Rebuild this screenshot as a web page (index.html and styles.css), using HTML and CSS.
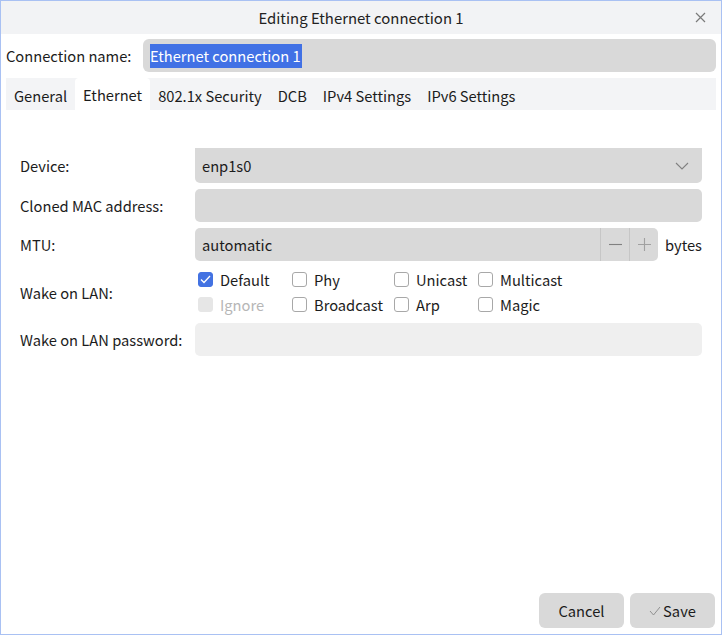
FILE: index.html
```html
<!DOCTYPE html>
<html>
<head>
<meta charset="utf-8">
<link rel="stylesheet" href="styles.css">
</head>
<body>
<div class="window">
  <div class="titlebar">
    <span></span>
    <span class="title">Editing Ethernet connection 1</span>
    <span class="close">
      <svg width="11" height="11" viewBox="0 0 11 11"><path d="M1 1L10 10M10 1L1 10" stroke="#7a7a7a" stroke-width="1.2" fill="none"/></svg>
    </span>
  </div>

  <div class="namerow">
    <label class="namelabel">Connection name:</label>
    <div class="nameinput"><span class="sel">Ethernet connection 1</span></div>
  </div>

  <div class="tabs">
    <div class="tab">General</div>
    <div class="tab active">Ethernet</div>
    <div class="tab">802.1x Security</div>
    <div class="tab">DCB</div>
    <div class="tab">IPv4 Settings</div>
    <div class="tab">IPv6 Settings</div>
  </div>

  <div class="form">
    <div class="lbl">Device:</div>
    <div class="field combo">
      <span>enp1s0</span>
      <svg class="chev" width="14" height="8" viewBox="0 0 14 8"><path d="M1 1L7 7L13 1" stroke="#808080" stroke-width="1.1" fill="none"/></svg>
    </div>

    <div class="lbl">Cloned MAC address:</div>
    <div class="field mac"></div>

    <div class="lbl">MTU:</div>
    <div class="mturow">
      <div class="field spin">
        <span class="spinval">automatic</span>
        <span class="spinbtn"><svg width="13" height="13" viewBox="0 0 13 13"><path d="M0 6.5H13" stroke="#808080" stroke-width="1.1"/></svg></span>
        <span class="spinbtn"><svg width="13" height="13" viewBox="0 0 13 13"><path d="M0 6.5H13M6.5 0V13" stroke="#a0a0a0" stroke-width="1.1"/></svg></span>
      </div>
      <span class="unit">bytes</span>
    </div>

    <div class="lbl">Wake on LAN:</div>
    <div class="checks">
      <label class="cb"><span class="box checked"><svg width="11" height="9" viewBox="0 0 11 9"><path d="M1 4.5L4 7.5L10 1" stroke="#fff" stroke-width="1.3" fill="none"/></svg></span>Default</label>
      <label class="cb"><span class="box"></span>Phy</label>
      <label class="cb"><span class="box"></span>Unicast</label>
      <label class="cb"><span class="box"></span>Multicast</label>
      <label class="cb disabled"><span class="box"></span>Ignore</label>
      <label class="cb"><span class="box"></span>Broadcast</label>
      <label class="cb"><span class="box"></span>Arp</label>
      <label class="cb"><span class="box"></span>Magic</label>
    </div>

    <div class="lbl">Wake on LAN password:</div>
    <div class="field pw"></div>
  </div>

  <div class="spacer"></div>

  <div class="buttons">
    <button class="btn">Cancel</button>
    <button class="btn"><svg class="ok" width="12" height="10" viewBox="0 0 12 10"><path d="M1 5L4.5 9L11 1" stroke="#909090" stroke-width="1" fill="none"/></svg>Save</button>
  </div>
</div>
</body>
</html>
```

FILE: styles.css
```css
* { box-sizing: border-box; }
html, body { margin: 0; padding: 0; background: #ffffff; }
body {
  font-family: "Noto Sans CJK SC", "Noto Sans", sans-serif;
  font-size: 14.7px;
  color: #1c1c1c;
}
.window {
  width: 722px;
  height: 635px;
  border: 1px solid #a9c1f3;
  display: flex;
  flex-direction: column;
  background: #fff;
}
.titlebar {
  height: 33px;
  flex: none;
  background: #f2f3f5;
  display: grid;
  grid-template-columns: 1fr auto 1fr;
  align-items: center;
}
.title { font-size: 14.9px; color: #222; }
.close { justify-self: end; margin-right: 15px; display: flex; }

.namerow {
  margin-top: 5px;
  padding: 0 5px;
  display: flex;
  align-items: center;
}
.namelabel { width: 137px; flex: none; }
.nameinput {
  flex: 1;
  height: 33px;
  background: #d9d9d9;
  border-radius: 6px;
  display: flex;
  align-items: center;
  padding-left: 7px;
}
.sel {
  background: #4171e5;
  color: #fff;
  line-height: 24px;
  padding: 0 1px 0 0;
}

.tabs {
  margin: 6px 5px 0;
  height: 32px;
  background: #f3f4f6;
  display: flex;
}
.tab {
  padding: 0 8px;
  display: flex;
  align-items: center;
  padding-top: 2px;
}
.tab.active {
  background: #fff;
  border-radius: 4px 4px 0 0;
  padding-top: 0;
}

.form {
  margin-top: 38px;
  padding: 0 19px;
  display: grid;
  grid-template-columns: 175px 1fr;
  row-gap: 6px;
  align-items: center;
}
.field {
  background: #d9d9d9;
  border-radius: 5px;
  height: 34px;
}
.combo {
  display: flex;
  align-items: center;
  justify-content: space-between;
  padding: 0 13px 0 7px;
  border-radius: 0 0 5px 5px;
  height: 35px;
}
.mac { height: 33px; }
.mturow {
  display: flex;
  align-items: center;
  gap: 7px;
}
.spin {
  flex: 1;
  display: flex;
  align-items: stretch;
  height: 33px;
}
.spinval { flex: 1; display: flex; align-items: center; padding-left: 7px; }
.spinbtn {
  width: 29px;
  border-left: 1px solid #c6c6c6;
  display: flex;
  align-items: center;
  justify-content: center;
}

.checks {
  display: grid;
  grid-template-columns: 94px 102px 84px auto;
  grid-auto-rows: 25px;
  padding-left: 3px;
}
.cb {
  display: flex;
  align-items: center;
  gap: 7px;
  white-space: nowrap;
}
.box {
  width: 15px;
  height: 15px;
  border: 1px solid #a8a8a8;
  border-radius: 3px;
  background: #fff;
  display: flex;
  align-items: center;
  justify-content: center;
  flex: none;
}
.box.checked { background: #4372e2; border-color: #4372e2; }
.cb.disabled { color: #b6b6b6; }
.cb.disabled .box { background: #e6e6e6; border-color: #e6e6e6; }
.pw { background: #efefef; height: 33px; }

.spacer { flex: 1; }
.buttons {
  display: flex;
  justify-content: flex-end;
  gap: 6px;
  padding: 0 6px 6px 0;
}
.btn {
  width: 85px;
  height: 35px;
  border: none;
  border-radius: 6px;
  background: #d9d9d9;
  font-family: inherit;
  font-size: 14.7px;
  color: #1c1c1c;
  display: flex;
  align-items: center;
  justify-content: center;
  padding: 0;
}
.ok { margin-right: 2px; }
```
